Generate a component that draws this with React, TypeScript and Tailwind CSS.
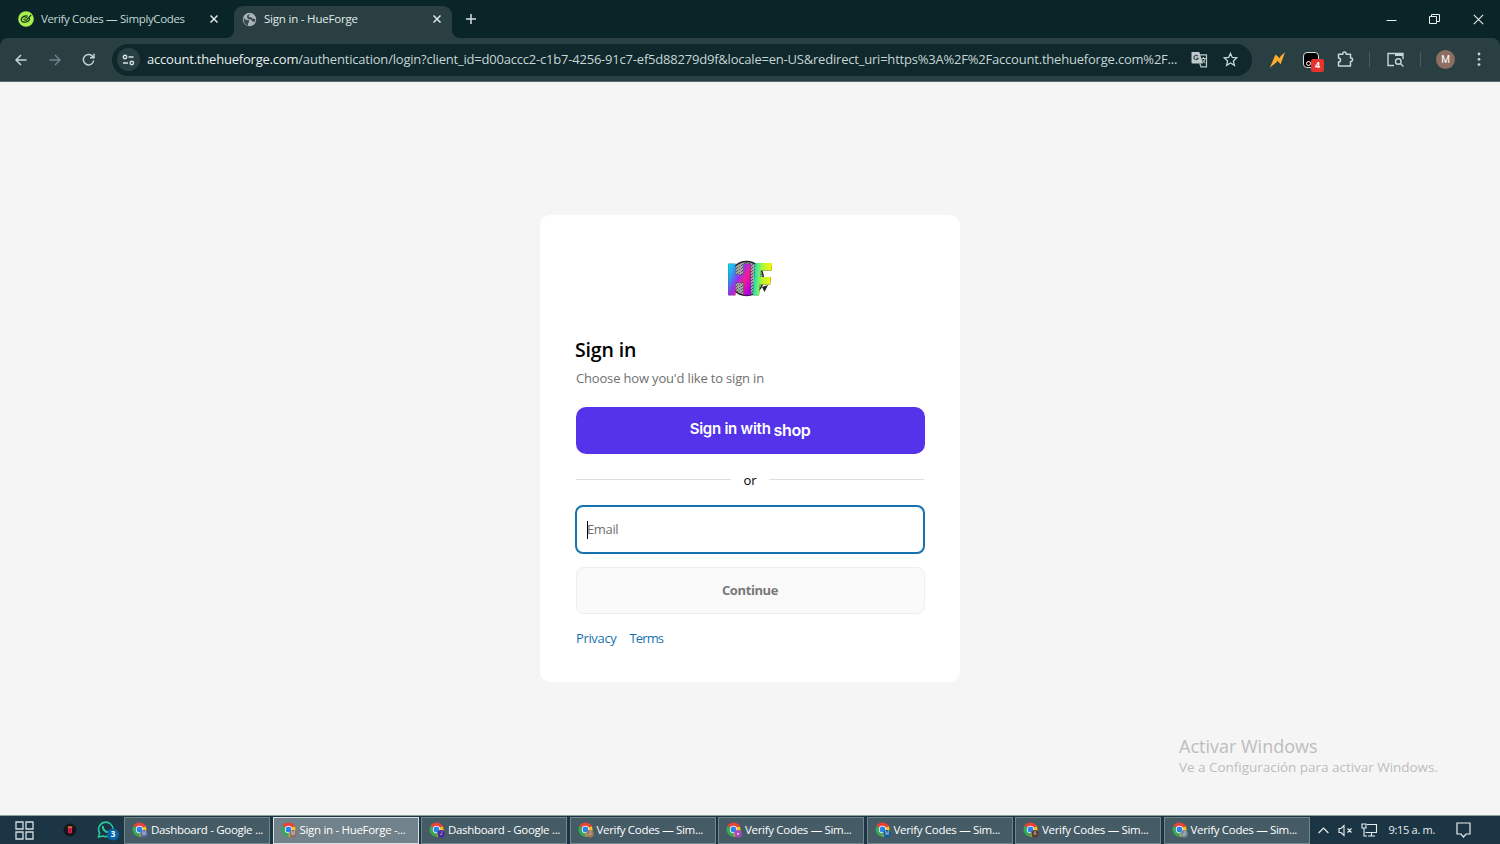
import type { ReactNode } from 'react';

interface TaskButtonProps {
  label: string;
  badge: string;
  letter: string;
  active?: boolean;
}

const tasks: TaskButtonProps[] = [
  { label: 'Dashboard - Google ...', badge: '#5866a8', letter: 'M' },
  { label: 'Sign in - HueForge -...', badge: '#8d6e63', letter: 'M', active: true },
  { label: 'Dashboard - Google ...', badge: '#4527a0', letter: 'J' },
  { label: 'Verify Codes — Sim...', badge: '#a1785c', letter: 'J' },
  { label: 'Verify Codes — Sim...', badge: '#ab47bc', letter: '●' },
  { label: 'Verify Codes — Sim...', badge: '#0b5c9c', letter: 'M' },
  { label: 'Verify Codes — Sim...', badge: '#5d3a2e', letter: 'A' },
  { label: 'Verify Codes — Sim...', badge: '#78909c', letter: 'J' },
];

function ChromeIcon({ badge, letter }: { badge: string; letter: string }) {
  return (
    <svg width="17" height="17" viewBox="0 0 17 17" className="shrink-0">
      <path d="M7.5 7.5 1.4 4A7.2 7.2 0 0 1 13.6 4Z" fill="#ea4335" />
      <path d="M7.5 7.5 13.6 4A7.2 7.2 0 0 1 7.5 14.7Z" fill="#fbc116" />
      <path d="M7.5 7.5V14.7A7.2 7.2 0 0 1 1.4 4Z" fill="#34a853" />
      <path d="M7.5 4h6.1" stroke="#ea4335" strokeWidth="1.5" />
      <circle cx="7.5" cy="7.5" r="3.7" fill="#fff" />
      <circle cx="7.5" cy="7.5" r="2.9" fill="#2f80e8" />
      <circle cx="12" cy="11.8" r="3.7" fill={badge} />
      <text x="12" y="13.4" textAnchor="middle" fontSize="4.5" fill="#ddd" fontFamily="Roboto">{letter}</text>
    </svg>
  );
}

function TaskButton({ label, badge, letter, active }: TaskButtonProps) {
  return (
    <button className={`flex h-[27px] w-[146px] shrink-0 items-center overflow-hidden border pl-[7px] ${active ? 'border-[#d9e0e2] bg-[#72828a]' : 'border-[#71878c] bg-[#455b66]'}`}>
      <ChromeIcon badge={badge} letter={letter} />
      <span className="ml-[2px] whitespace-nowrap text-[11.5px] tracking-[-0.31px] text-white">{label}</span>
    </button>
  );
}

function CloseIcon() {
  return (
    <svg width="10" height="10" viewBox="0 0 10 10" stroke="#e0e9e9" strokeWidth="1.5">
      <path d="m1.5 1.5 7 7m0-7-7 7" />
    </svg>
  );
}

function Slot({ className, children }: { className: string; children: ReactNode }) {
  return <div className={`flex h-full shrink-0 items-center justify-center ${className}`}>{children}</div>;
}

function TabStrip() {
  return (
    <div className="flex h-[38px] bg-[#0a2528] text-[11.5px]">
      <div className="flex h-full w-[226px] items-center pl-[18px] pr-[7px]">
        <svg width="16" height="16" viewBox="0 0 16 16" fill="none" stroke="#173018" strokeWidth="1.2">
          <circle cx="8" cy="8" r="7.8" fill="#a6ef4c" stroke="none" />
          <path d="M9.8 5.3C7.5 4.3 4 5.5 3.3 8c-.5 2.200 1.500 3.300 4 3.200 2.700-.1 4.700-2 4.200-4.200M5.500 8.200c1 .7 2 1.200 3 1l4.700-5.400M6.500 7l2.500-.5" />
        </svg>
        <span className="ml-[7px] flex-1 whitespace-nowrap tracking-[-0.35px] text-[#c5d6d5]">Verify Codes — SimplyCodes</span>
        <CloseIcon />
      </div>
      <div className="mt-[6px] flex">
        <svg width="8" height="32" viewBox="0 0 8 32"><path d="M8 24v8H0a8 8 0 0 0 8-8Z" fill="#293f42" /></svg>
        <div className="flex h-[32px] w-[218px] items-center rounded-t-[9px] bg-[#293f42] pb-[6px] pl-[8px] pr-[10px]">
          <svg width="15" height="15" viewBox="0 0 15 15">
            <circle cx="7.5" cy="7.5" r="6.7" fill="#a9b2b7" />
            <path d="M1.8 6 4 8l3 .3v2l-1 1v2.500A6.700 6.700 0 0 1 1.800 6ZM8.500 2 6.800 3.500v1.700h2.500l1.200 1.600 2.800.2-.3 2.500-2 .3-1.500-1.500L8.500 7.200H6.200L5 5.500 5.500 3Z" fill="#34494d" />
          </svg>
          <span className="ml-[7px] flex-1 whitespace-nowrap tracking-[-0.2px] text-[#e2ecec]">Sign in - HueForge</span>
          <CloseIcon />
        </div>
        <svg width="8" height="32" viewBox="0 0 8 32"><path d="M0 24v8h8a8 8 0 0 1-8-8Z" fill="#293f42" /></svg>
      </div>
      <Slot className="w-[21px]">
        <svg width="12" height="12" viewBox="0 0 12 12" stroke="#d3e1e1" strokeWidth="1.5"><path d="M6 1v10M1 6h10" /></svg>
      </Slot>
      <div className="ml-auto flex h-full text-[#e9eeee]">
        <Slot className="w-[43px]"><svg width="11" height="11" stroke="currentColor"><path d="M.5 6.500h10" /></svg></Slot>
        <Slot className="w-[43px]">
          <svg width="11" height="11" viewBox="0 0 11 11" fill="none" stroke="currentColor"><path d="M.5 2.500h7v7h-7zM2.500 2.500v-2h8v7h-2.500" /></svg>
        </Slot>
        <Slot className="w-[44px]">
          <svg width="11" height="11" viewBox="0 0 11 11" stroke="currentColor" strokeWidth="1.1"><path d="m.8.8 9.400 9.400m0-9.400L.8 10.200" /></svg>
        </Slot>
      </div>
    </div>
  );
}

function Toolbar() {
  return (
    <div className="h-[44px] bg-[#0a2528]">
      <div className="flex h-full items-center rounded-t-[8px] border-b border-[#596c6e] bg-[#293f42] text-[#c4d7d7]">
        <Slot className="w-[42px]">
          <svg width="12" height="12" viewBox="0 0 12 12" fill="none" stroke="currentColor" strokeWidth="1.5"><path d="M11.500 6H1M6 1 1 6l5 5" /></svg>
        </Slot>
        <Slot className="w-[26px] text-[#71868a]">
          <svg width="12" height="12" viewBox="0 0 12 12" fill="none" stroke="currentColor" strokeWidth="1.4"><path d="M.5 6H11M6 1l5 5-5 5" /></svg>
        </Slot>
        <Slot className="w-[40px]">
          <svg width="13" height="13" viewBox="0 0 13 13" fill="none" stroke="currentColor" strokeWidth="1.5"><path d="M11.200 4.300A5.200 5.200 0 1 0 11.700 7.500M12 .8v4H8" /></svg>
        </Slot>
        <div className="ml-[4px] flex h-[32px] w-[1140px] items-center rounded-full bg-[#10272b] pl-[5px] pr-[14px]">
          <div className="flex size-[23px] shrink-0 items-center justify-center rounded-full bg-[#293f42]">
            <svg width="13" height="12" viewBox="0 0 13 12" fill="none" stroke="#d4e3e3" strokeWidth="1.4"><circle cx="3" cy="3" r="1.7" /><path d="M6.500 3h5M1 9h5" /><circle cx="9.8" cy="9" r="1.7" /></svg>
          </div>
          <div className="ml-[7px] w-[1034px] shrink-0 whitespace-nowrap text-[13px] tracking-[-0.205px] text-[#c4d6d6]">
            <span className="text-[#e6eeee]">account.thehueforge.com</span>/authentication/login?client_id=d00accc2-c1b7-4256-91c7-ef5d88279d9f&amp;locale=en-US&amp;redirect_uri=https%3A%2F%2Faccount.thehueforge.com%2F...
          </div>
          <svg className="ml-[10px] shrink-0" width="17" height="17" viewBox="0 0 17 17">
            <path d="M.5 1h7.800l3.700 11.500H1.500a1 1 0 0 1-1-1Z" fill="#bfcbcd" />
            <path d="M9 3.800h6.500v12H10L8.800 12.500" fill="none" stroke="#bfcbcd" strokeWidth="1.2" />
            <path d="M6.900 5.200a2.200 2.200 0 1 0 .3 2H5.300" fill="none" stroke="#33474b" strokeWidth="1.1" />
            <path d="M10.500 7.500h4.500M12.500 6v1.500M14 7.500c-.3 2-1.300 3.200-2.500 4.500M11.300 8.500l3 3.800" fill="none" stroke="#bfcbcd" />
          </svg>
          <svg className="ml-auto" width="15" height="15" viewBox="0 0 15 15" fill="none" stroke="currentColor" strokeWidth="1.3"><path d="m7.500 1.400 1.800 4.100 4.400.4-3.300 3 1 4.400-3.900-2.400-3.900 2.400 1-4.400-3.300-3 4.400-.4Z" /></svg>
        </div>
        <Slot className="ml-[8px] w-[34px]">
          <svg width="17" height="16" viewBox="0 0 17 16"><path d="M16 .3 11.500 4.200 10.800 6.300 6.500 2.500 .8 15.700l6.500-5.200 1-1.800 3.300 3.600Z" fill="#ffad2f" /></svg>
        </Slot>
        <Slot className="w-[34px]">
          <div className="relative size-[16px] rounded-[4px] border border-[#d3dbdc] bg-black">
            <div className="absolute bottom-[1px] left-[2px] size-[5px] rounded-full border border-white" />
            <div className="absolute left-[7px] top-[6px] flex h-[13px] w-[13px] items-center justify-center rounded-[2px] bg-[#e5322f] text-[9px] font-bold text-white">4</div>
          </div>
        </Slot>
        <Slot className="w-[35px]">
          <svg width="17" height="17" viewBox="0 0 17 17" fill="none" stroke="currentColor" strokeWidth="1.5" strokeLinejoin="round"><path d="M1.500 3.200h4.300c0-2.800 3.400-2.800 3.400 0h4.300v3.900c2.800 0 2.800 3.400 0 3.400v4.600h-12v-4c2.700-.2 2.700-3.700 0-4Z" /></svg>
        </Slot>
        <div className="ml-[6px] h-[15px] w-px bg-[#475d60]" />
        <Slot className="ml-[8px] w-[34px]">
          <svg width="17" height="16" viewBox="0 0 17 16" fill="none" stroke="currentColor" strokeWidth="1.4"><path d="M7 13.500H1v-12h15v5.500" /><path d="M8 2.500h8" strokeWidth="3" /><circle cx="11.3" cy="9.5" r="2.8" /><path d="m13.400 11.600 3 3" /></svg>
        </Slot>
        <div className="ml-[8px] h-[15px] w-px bg-[#475d60]" />
        <div className="ml-[15px] flex size-[19px] items-center justify-center rounded-full bg-[#8d6e63] font-[Roboto] text-[10px] text-white">M</div>
        <Slot className="ml-[15px] w-[18px]">
          <svg width="4" height="15" viewBox="0 0 4 15" fill="currentColor"><circle cx="2" cy="2" r="1.4" /><circle cx="2" cy="7.3" r="1.4" /><circle cx="2" cy="12.6" r="1.4" /></svg>
        </Slot>
      </div>
    </div>
  );
}

function Logo() {
  return (
    <svg width="46" height="42" viewBox="0 0 46 42" className="mx-auto overflow-visible">
      <defs>
        <linearGradient id="h" gradientUnits="userSpaceOnUse" x1="2" y1="4" x2="30" y2="19">
          <stop offset="0" stopColor="#00e5f2" />
          <stop offset=".3" stopColor="#3b8cf2" />
          <stop offset=".5" stopColor="#9b2ff0" />
          <stop offset=".7" stopColor="#f51c8e" />
          <stop offset="1" stopColor="#b000e8" />
        </linearGradient>
        <linearGradient id="f" gradientUnits="userSpaceOnUse" x1="26" y1="0" x2="44" y2="0">
          <stop offset="0" stopColor="#00dfd0" />
          <stop offset=".45" stopColor="#a4f83a" />
          <stop offset="1" stopColor="#fff500" />
        </linearGradient>
        <pattern id="noise" width="5" height="3" patternUnits="userSpaceOnUse"><rect width="5" height="3" fill="#a4a4a4" /><path d="M0 0h1v1H0zM2 2h1v1H2zM4 1h1v1H4z" fill="#555" /></pattern>
      </defs>
      <circle cx="19.5" cy="20.5" r="17" fill="url(#noise)" stroke="#222" strokeWidth="1.3" />
      <path d="m35 29 6-2-3.500 7Z" fill="#222" />
      <g fontFamily="Liberation Sans" fontWeight="bold" fontSize="43" strokeWidth="2.6" className="drop-shadow-[0_0_0.6px_#111]">
        <text x="0" y="35.5" fill="url(#h)" stroke="url(#h)" textLength="25" lengthAdjust="spacingAndGlyphs">H</text>
        <text x="26" y="35.5" fill="url(#f)" stroke="url(#f)" textLength="18" lengthAdjust="spacingAndGlyphs" transform="skewX(-4) translate(1.5 0)">F</text>
      </g>
    </svg>
  );
}

function SignInCard() {
  return (
    <main className="h-[467px] w-[420px] rounded-[10px] bg-white px-[36px] pt-[43px]">
      <Logo />
      <h1 className="-ml-px mt-[36px] h-[28px] text-[19.5px] font-semibold leading-[28px] tracking-[-0.15px] text-black">Sign in</h1>
      <p className="mt-[4px] h-[20px] text-[13px] leading-[20px] tracking-[-0.17px] text-[#707070]">Choose how you'd like to sign in</p>
      <button className="-ml-[0.5px] mt-[19px] flex h-[47px] w-[349px] items-center justify-center rounded-[10px] bg-[#5433eb] pb-[3px] font-[Inter] text-[15px] font-semibold text-white">
        <span className="tracking-[-0.25px]">Sign in with</span>
        <span className="ml-[3px] mt-[1px] text-[16px] tracking-[-0.4px]">shop</span>
      </button>
      <div className="mt-[15px] flex h-[20px] items-center text-[13px] text-black">
        <div className="h-px flex-1 bg-[#dedede]" />
        <span className="w-[38px] pt-[3px] text-center">or</span>
        <div className="h-px flex-1 bg-[#dedede]" />
      </div>
      <div className="-mx-px mt-[16px] flex h-[49px] items-center rounded-[8px] border-2 border-[#1773b0] pl-[10px] text-[13px] text-[#707070]">
        <div className="h-[18px] w-px bg-black" />
        <span className="-ml-px mt-px tracking-[-0.35px]">Email</span>
      </div>
      <button className="-ml-[0.5px] mt-[13px] flex h-[47px] w-[349px] items-center justify-center rounded-[8px] border border-[#eee] bg-[#fafafa] pt-px text-[13px] font-bold tracking-[-0.4px] text-[#787878]">Continue</button>
      <div className="mt-[14px] flex h-[20px] items-center gap-[13px] pt-px text-[13px] tracking-[-0.35px] text-[#1773b0]">
        <a href="#">Privacy</a>
        <a href="#" className="tracking-[-0.85px]">Terms</a>
      </div>
    </main>
  );
}

function Taskbar() {
  return (
    <footer className="flex h-[29px] items-center border-t border-[#8c9d9f] bg-[#1c3544] text-[#e8eef0]">
      <Slot className="w-[48px]">
        <svg width="19" height="19" viewBox="0 0 19 19" fill="none" stroke="#d4dcdf" strokeWidth="1.3"><path d="M1 1h7v7H1zM11 1h7v7h-7zM1 11h7v7H1zM11 11h7v7h-7z" /></svg>
      </Slot>
      <Slot className="w-[44px]">
        <svg width="14" height="14" viewBox="0 0 14 14"><circle cx="7" cy="7" r="6.5" fill="#171719" /><rect x="5" y="4" width="4" height="6.3" rx="1" fill="#e71952" /><path d="M4.800 4h4.500" stroke="#ffae32" /><path d="M7 5.500v3" stroke="#541335" /></svg>
      </Slot>
      <Slot className="w-[32px] pt-[1px]">
        <svg width="23" height="20" viewBox="0 0 23 20">
          <path d="m1.500 16 1.100-4A7.200 7.200 0 1 1 6 15Z" fill="none" stroke="#28c99b" strokeWidth="1.6" />
          <path d="M6 5c-1 3 3 7 6 6" fill="none" stroke="#28c99b" strokeWidth="2" />
          <circle cx="16" cy="13.5" r="6" fill="#0762a7" />
          <text x="16" y="16.2" fontSize="8" fontWeight="bold" fill="#fff" textAnchor="middle">3</text>
        </svg>
      </Slot>
      <div className="flex gap-[2.5px]">
        {tasks.map((task, i) => <TaskButton key={i} {...task} />)}
      </div>
      <Slot className="ml-[8px] w-[12px]"><svg width="11" height="7" viewBox="0 0 11 7" fill="none" stroke="currentColor" strokeWidth="1.2"><path d="m.6 6 4.900-5 4.900 5" /></svg></Slot>
      <Slot className="ml-[8px] w-[16px]">
        <svg width="15" height="13" viewBox="0 0 15 13" fill="none" stroke="currentColor" strokeWidth="1.1"><path d="M1 4.500h2l3-3v10l-3-3H1ZM9.500 4.500l4 4m0-4-4 4" /></svg>
      </Slot>
      <Slot className="ml-[7px] w-[18px]">
        <svg width="17" height="15" viewBox="0 0 17 15" fill="none" stroke="currentColor" strokeWidth="1.1"><path d="M6 1.500h9.500v8H4.500M10.500 9.500V13M7 13h7M1 1h4v4H1zM3 5v8h3" /></svg>
      </Slot>
      <time className="ml-[10px] w-[48px] whitespace-nowrap text-[11px] tracking-[-0.3px]">9:15 a. m.</time>
      <Slot className="ml-[19px] w-[16px]"><svg width="15" height="16" viewBox="0 0 15 16" fill="none" stroke="currentColor" strokeWidth="1.2"><path d="M1 1h13v11h-4l-2.500 3L5 12H1Z" /></svg></Slot>
    </footer>
  );
}

function App() {
  return (
    <div className="flex h-[844px] w-[1500px] flex-col overflow-hidden bg-[#f5f5f5] font-['Open_Sans','Noto_Sans',sans-serif]">
      <TabStrip />
      <Toolbar />
      <div className="relative flex flex-1 justify-center pt-[133px]">
        <SignInCard />
        <div className="absolute left-[1179px] top-[652px] whitespace-nowrap text-[#bdbdbd]">
          <div className="text-[18px] leading-[24px]">Activar Windows</div>
          <div className="text-[13.5px] leading-[19px] tracking-[-0.03px]">Ve a Configuración para activar Windows.</div>
        </div>
      </div>
      <Taskbar />
    </div>
  );
}

export default App;
